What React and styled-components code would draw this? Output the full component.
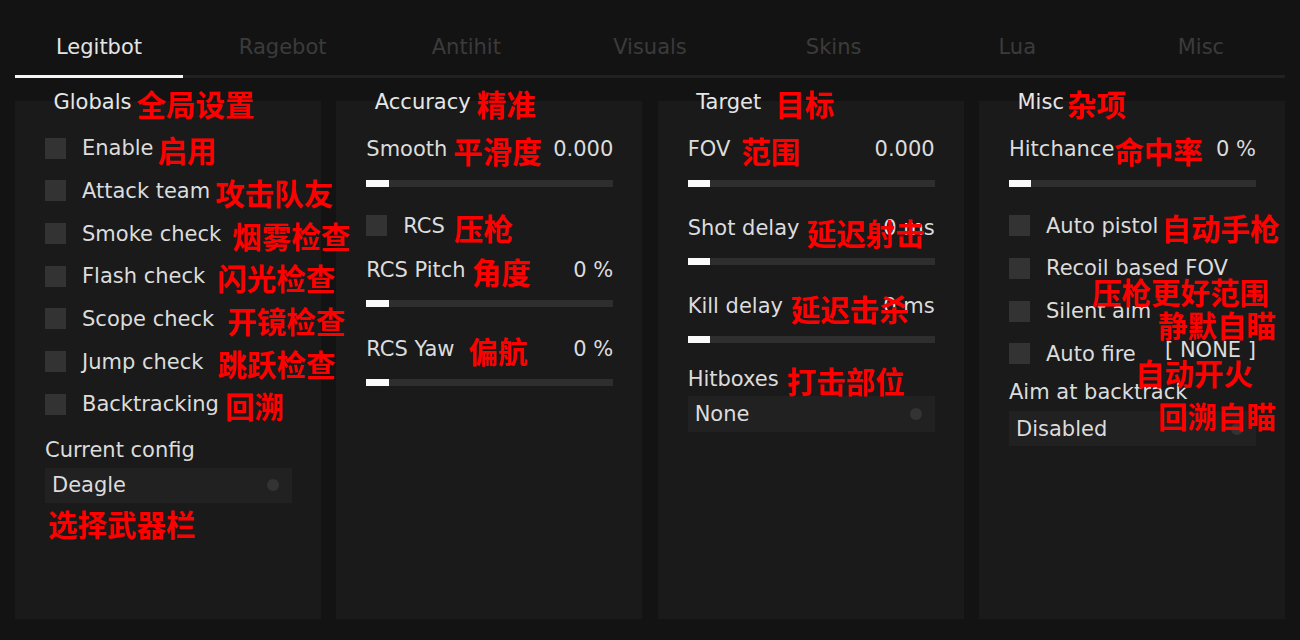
import React from 'react';
import styled, { createGlobalStyle, css } from 'styled-components';

const Global = createGlobalStyle`
  html, body { margin: 0; padding: 0; background: #131313; }
  body {
    width: 1300px; height: 640px; overflow: hidden;
    font-family: "DejaVu Sans", Verdana, sans-serif;
  }
`;

const Page = styled.div`
  width: 1300px;
  height: 640px;
  box-sizing: border-box;
  padding: 0 15px;
  background: #131313;
`;

const TabBar = styled.nav`
  display: grid;
  grid-template-columns: repeat(7, 168px);
  column-gap: 15.67px;
  border-bottom: 3px solid #212121;
`;

const Tab = styled.div`
  box-sizing: border-box;
  height: 78px;
  margin-bottom: -3px;
  padding-top: 35px;
  line-height: 24px;
  font-size: 21px;
  text-align: center;
  color: ${p => (p.$active ? '#e4e4e4' : '#3b3b3b')};
  border-bottom: 3px solid ${p => (p.$active ? '#f4f4f4' : 'transparent')};
`;

const Columns = styled.div`
  display: grid;
  grid-template-columns: repeat(4, minmax(0, 1fr));
  column-gap: 15.33px;
  margin-top: 23px;
  height: 518px;
`;

const Panel = styled.section`
  position: relative;
  display: flex;
  flex-direction: column;
  min-width: 0;
  padding: 0 29px 0 30px;
  background: #1a1a1a;
`;

const Title = styled.h3`
  display: flex;
  align-items: center;
  height: 24px;
  margin: -11px 0 0 8.5px;
  line-height: 24px;
  font-size: 21px;
  font-weight: normal;
  color: #e6e6e6;
  white-space: nowrap;
`;

const Note = styled.span`
  position: relative;
  z-index: 2;
  flex-shrink: 0;
  align-self: ${p => (p.$block ? 'flex-start' : 'auto')};
  margin-left: ${p => p.$gap ?? 6}px;
  margin-top: ${p => p.$mt ?? 0}px;
  font-family: "Noto Sans CJK SC", "Noto Sans CJK JP", sans-serif;
  font-weight: 700;
  font-size: 29.5px;
  line-height: 30px;
  color: #ff0000;
  white-space: nowrap;
  transform: translateY(1px);
  ${p =>
    p.$at &&
    css`
      position: absolute;
      left: ${p.$at[0]}px;
      top: ${p.$at[1]}px;
      margin: 0;
    `}
`;

const FieldRow = styled.div`
  position: relative;
  display: flex;
  align-items: center;
  flex-shrink: 0;
  height: 24px;
  margin-top: ${p => p.$mt ?? 0}px;
  font-size: 21px;
  line-height: 24px;
  color: #dcdcdc;
  white-space: nowrap;
  transform: translateY(1px);
`;

const Value = styled.span`
  margin-left: auto;
  color: #dcdcdc;
  transform: translateY(${p => p.$dy ?? 0}px);
`;

const Track = styled.div`
  flex-shrink: 0;
  height: 7px;
  margin-top: ${p => p.$mt ?? 20}px;
  background: #2e2e2e;
`;

const Fill = styled.div`
  height: 100%;
  background: #fafafa;
`;

const CheckRow = styled.div`
  position: relative;
  display: flex;
  align-items: center;
  flex-shrink: 0;
  height: 42.67px;
  margin-top: ${p => p.$mt ?? 0}px;
  font-size: 21px;
  color: #dcdcdc;
  white-space: nowrap;
`;

const Box = styled.span`
  flex-shrink: 0;
  width: 21px;
  height: 21px;
  margin-right: 16px;
  background: #333333;
`;

const Select = styled.div`
  box-sizing: border-box;
  display: flex;
  align-items: center;
  justify-content: space-between;
  flex-shrink: 0;
  width: 247px;
  height: ${p => p.$h ?? 35}px;
  margin-top: ${p => p.$mt ?? 7}px;
  padding: 0 13px 0 7px;
  background: #212121;
  font-size: 21px;
  color: #dcdcdc;
`;

const Dot = styled.span`
  width: 12px;
  height: 12px;
  border-radius: 50%;
  background: #333333;
`;

const tabs = ['Legitbot', 'Ragebot', 'Antihit', 'Visuals', 'Skins', 'Lua', 'Misc'];

const Slider = ({ pct = 9, mt }) => (
  <Track $mt={mt}>
    <Fill style={{ width: `${pct}%` }} />
  </Track>
);

const Check = ({ label, note, gap, at, mt, children }) => (
  <CheckRow $mt={mt}>
    <Box />
    <span>{label}</span>
    {note && <Note $gap={gap} $at={at}>{note}</Note>}
    {children}
  </CheckRow>
);

export default function App() {
  return (
    <Page>
      <Global />
      <TabBar>
        {tabs.map((t, i) => (
          <Tab key={t} $active={i === 0}>{t}</Tab>
        ))}
      </TabBar>

      <Columns>
        <Panel>
          <Title>Globals<Note $gap={5}>全局设置</Note></Title>
          <Check mt={13} label="Enable" note="启用" gap={4} />
          <Check label="Attack team" note="攻击队友" gap={5} />
          <Check label="Smoke check" note="烟雾检查" gap={11} />
          <Check label="Flash check" note="闪光检查" gap={12} />
          <Check label="Scope check" note="开镜检查" gap={13} />
          <Check label="Jump check" note="跳跃检查" gap={14} />
          <Check label="Backtracking" note="回溯" gap={6} />
          <FieldRow $mt={11.3}>Current config</FieldRow>
          <Select $mt={7}>
            <span>Deagle</span>
            <Dot />
          </Select>
          <Note $block $gap={3} $mt={4}>选择武器栏</Note>
        </Panel>

        <Panel>
          <Title>Accuracy<Note $gap={6}>精准</Note></Title>
          <FieldRow $mt={22}>
            Smooth<Note $gap={6}>平滑度</Note>
            <Value>0.000</Value>
          </FieldRow>
          <Slider mt={20} />
          <Check mt={17.5} label="RCS" note="压枪" gap={9} />
          <FieldRow $mt={9.8}>
            RCS Pitch<Note $gap={6}>角度</Note>
            <Value>0 %</Value>
          </FieldRow>
          <Slider mt={19} />
          <FieldRow $mt={29}>
            RCS Yaw<Note $gap={14}>偏航</Note>
            <Value>0 %</Value>
          </FieldRow>
          <Slider mt={19} />
        </Panel>

        <Panel>
          <Title>Target<Note $gap={14}>目标</Note></Title>
          <FieldRow $mt={22}>
            FOV<Note $gap={11}>范围</Note>
            <Value>0.000</Value>
          </FieldRow>
          <Slider mt={20} />
          <FieldRow $mt={28}>
            Shot delay
            <Value>0 ms</Value>
            <Note $at={[119, 0]}>延迟射击</Note>
          </FieldRow>
          <Slider mt={19} />
          <FieldRow $mt={28}>
            Kill delay
            <Value>0 ms</Value>
            <Note $at={[103, -2.5]}>延迟击杀</Note>
          </FieldRow>
          <Slider mt={19} />
          <FieldRow $mt={23}>
            Hitboxes<Note $gap={8}>打击部位</Note>
          </FieldRow>
          <Select $mt={6} $h={36}>
            <span>None</span>
            <Dot />
          </Select>
        </Panel>

        <Panel>
          <Title>Misc<Note $gap={3}>杂项</Note></Title>
          <FieldRow $mt={22}>
            Hitchance<Note $gap={0}>命中率</Note>
            <Value>0 %</Value>
          </FieldRow>
          <Slider mt={20} />
          <Check mt={17.5} label="Auto pistol" note="自动手枪" gap={3} />
          <Check label="Recoil based FOV" note="压枪更好范围" at={[83, 27.8]} />
          <Check label="Silent aim" note="静默自瞄" at={[149, 18]} />
          <Check label="Auto fire" note="自动开火" at={[126, 24]}>
            <Value $dy={-4}>[ NONE ]</Value>
          </Check>
          <FieldRow $mt={4}>
            Aim at backtrack
            <Note $at={[149, 19]}>回溯自瞄</Note>
          </FieldRow>
          <Select $mt={8}>
            <span>Disabled</span>
            <Dot />
          </Select>
        </Panel>
      </Columns>
    </Page>
  );
}
